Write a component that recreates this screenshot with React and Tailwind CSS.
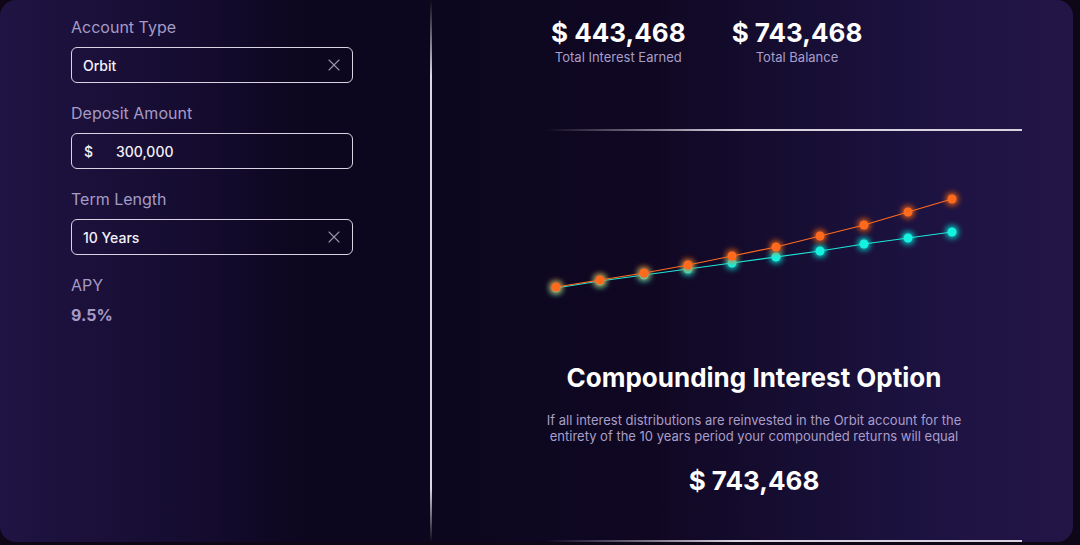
import { X } from 'lucide-react';

const orange = [286, 279, 272, 264, 255, 246, 235, 224, 211, 198];
const cyan = [287, 280, 274, 268, 262, 256, 250, 243, 237, 231];
const xs = [556, 600, 644, 688, 732, 776, 820, 864, 908, 952];

const Field = ({ label, children }) => (
  <div className="mb-[18px]">
    <div className="text-[16px] leading-6 text-[#a59bc6]">{label}</div>
    <div className="mt-2 h-[36px] w-[282px] rounded-md border border-[#d9d3e3] flex items-center pl-[11px] pr-3 text-[14px] font-medium text-[#f4f1f8]">
      {children}
    </div>
  </div>
);

const Chart = () => {
  // chart drawn in page coords, shifted into the panel
  const ox = 432;
  const oy = 150;
  const pts = (ys) => xs.map((x, i) => `${x - ox},${ys[i] - oy}`).join(' ');
  return (
    <svg width="641" height="200" className="block mt-[20px]">
      <defs>
        <filter id="glow" x="-150%" y="-150%" width="400%" height="400%">
          <feGaussianBlur stdDeviation="3.5" result="b" />
          <feMerge>
            <feMergeNode in="b" />
            <feMergeNode in="b" />
            <feMergeNode in="SourceGraphic" />
          </feMerge>
        </filter>
      </defs>
      <polyline points={pts(cyan)} fill="none" stroke="#1ee8d8" strokeWidth="1.2" />
      {xs.map((x, i) => (
        <circle key={'c' + i} cx={x - ox} cy={cyan[i] - oy} r="4.5" fill="#12f2e0" filter="url(#glow)" />
      ))}
      <polyline points={pts(orange)} fill="none" stroke="#ff6a1f" strokeWidth="1.2" />
      {xs.map((x, i) => (
        <circle key={'o' + i} cx={x - ox} cy={orange[i] - oy} r="4.5" fill="#ff6a1f" filter="url(#glow)" />
      ))}
    </svg>
  );
};

const Stat = ({ value, label }) => (
  <div className="flex flex-col items-center">
    <div className="text-[26px] leading-[32px] font-bold text-white">{value}</div>
    <div className="text-[13px] leading-4 text-[#a99ec9]">{label}</div>
  </div>
);

export default function App() {
  return (
    <div className="w-[1080px] h-[545px] bg-[#0f0618] overflow-hidden" style={{ fontFamily: 'Inter, "Noto Sans", sans-serif' }}>
      <div className="w-[1073px] h-[542px] rounded-2xl overflow-hidden flex">
        <div className="w-[430px] h-full bg-[linear-gradient(to_right,#1f1443,#150c30_45%,#0c061e_72%,#0c061e)] pl-[71px] pt-[15px]">
          <Field label="Account Type">
            <span className="flex-1">Orbit</span>
            <X size={20} strokeWidth={1.3} className="text-[#9b94aa] -mr-1" />
          </Field>
          <Field label="Deposit Amount">
            <span className="w-[33px] pl-[1px]">$</span>
            <span>300,000</span>
          </Field>
          <Field label="Term Length">
            <span className="flex-1">10 Years</span>
            <X size={20} strokeWidth={1.3} className="text-[#9b94aa] -mr-1" />
          </Field>
          <div className="text-[16px] leading-6 text-[#a59bc6]">APY</div>
          <div className="mt-[6px] text-[16px] leading-6 font-bold text-[#a59bc6]">9.5%</div>
        </div>

        <div className="w-[2px] h-full bg-[linear-gradient(to_bottom,transparent,#ddd8e2_14%,#ddd8e2_90%,transparent)]" />

        <div className="flex-1 h-full flex flex-col bg-[linear-gradient(to_right,#0c061e,#100823_35%,#1c1240_75%,#231647)]">
          <div className="flex gap-[46px] pl-[119px] pt-[17px]">
            <Stat value="$ 443,468" label="Total Interest Earned" />
            <Stat value="$ 743,468" label="Total Balance" />
          </div>
          <div className="mt-[64px] ml-[113px] w-[477px] h-[2px] bg-[linear-gradient(to_right,transparent,#d8d2de_40%)]" />
          <Chart />
          <div className="mt-[11px] pl-[3px] text-center text-[26px] leading-[32px] font-bold text-white">
            Compounding Interest Option
          </div>
          <p className="mt-[18px] pl-[3px] text-center text-[13px] leading-4 text-[#a99ec9] whitespace-nowrap">
            If all interest distributions are reinvested in the Orbit account for the
            <br />
            entirety of the 10 years period your compounded returns will equal
          </p>
          <div className="mt-[21px] pl-[3px] text-center text-[26px] leading-[32px] font-bold text-white">$ 743,468</div>
          <div className="mt-auto ml-[113px] w-[477px] h-[2px] bg-[linear-gradient(to_right,transparent,#d8d2de_40%)]" />
        </div>
      </div>
    </div>
  );
}
